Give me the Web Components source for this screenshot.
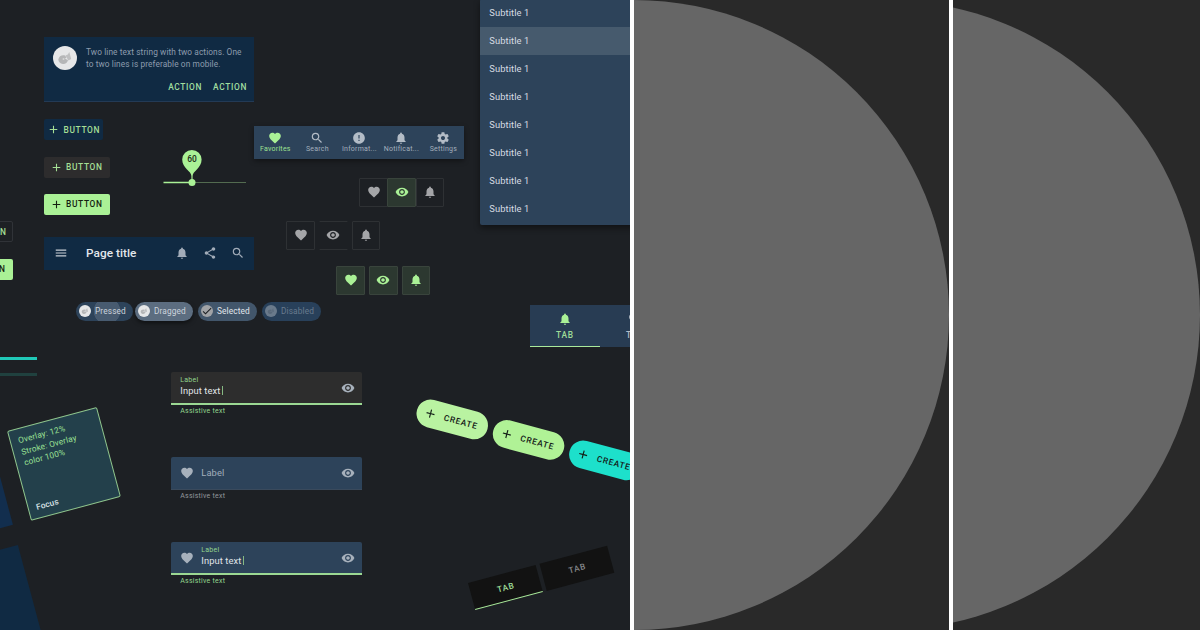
<!DOCTYPE html>
<html lang="en">
<head>
  <meta charset="UTF-8">
  <title>Dark theme components</title>
<style>
body {
  margin: 0;
  width: 1200px;
  height: 630px;
  overflow: hidden;
  background: #fff;
  font-family: Roboto, "Liberation Sans", sans-serif;
}

ui-gallery {
  --green: #aaf196;
  --navy: #102a43;
  --steel: #2d435a;
  --canvas: #1d2024;
}

/* free canvas: every sample sits at its own spot */
ui-board > * {
  position: absolute;
  left: var(--x);
  top: var(--y);
}
</style>
</head>
<body>

<ui-gallery>
  <ui-board>
    <ui-banner style="--x:44px;--y:37px">
      Two line text string with two actions. One<br>to two lines is preferable on mobile.
      <span slot="action">ACTION</span>
      <span slot="action">ACTION</span>
    </ui-banner>

    <ui-button kind="text" style="--x:44px;--y:119px">BUTTON</ui-button>
    <ui-button kind="tonal" style="--x:44px;--y:156.5px">BUTTON</ui-button>
    <ui-button kind="filled" style="--x:44px;--y:193.5px">BUTTON</ui-button>
    <ui-button kind="outlined" style="--x:-53px;--y:221px">BUTTON</ui-button>
    <ui-button kind="filled" style="--x:-53px;--y:258.5px">BUTTON</ui-button>

    <ui-slider style="--x:163px;--y:149px">60</ui-slider>

    <ui-app-bar style="--x:44px;--y:237px">Page title</ui-app-bar>

    <ui-bottom-nav style="--x:254.4px;--y:126px">
      <ui-nav-item icon="heart" active>Favorites</ui-nav-item>
      <ui-nav-item icon="search">Search</ui-nav-item>
      <ui-nav-item icon="info">Informat...</ui-nav-item>
      <ui-nav-item icon="bell">Notificat...</ui-nav-item>
      <ui-nav-item icon="gear">Settings</ui-nav-item>
    </ui-bottom-nav>

    <ui-toggle-row joined style="--x:359.4px;--y:178px">
      <ui-toggle icon="heart"></ui-toggle>
      <ui-toggle icon="eye" on></ui-toggle>
      <ui-toggle icon="bell"></ui-toggle>
    </ui-toggle-row>
    <ui-toggle-row style="--x:286.4px;--y:221px">
      <ui-toggle icon="heart"></ui-toggle>
      <ui-toggle icon="eye" open-sides></ui-toggle>
      <ui-toggle icon="bell"></ui-toggle>
    </ui-toggle-row>
    <ui-toggle-row style="--x:336.4px;--y:266px">
      <ui-toggle icon="heart" on></ui-toggle>
      <ui-toggle icon="eye" on></ui-toggle>
      <ui-toggle icon="bell" on></ui-toggle>
    </ui-toggle-row>

    <ui-chip state="pressed" style="--x:76px;--y:302px;--w:56.5px">Pressed</ui-chip>
    <ui-chip state="dragged" style="--x:135px;--y:302px;--w:58px">Dragged</ui-chip>
    <ui-chip state="selected" style="--x:198px;--y:302px;--w:59px">Selected</ui-chip>
    <ui-chip state="disabled" style="--x:262px;--y:302px;--w:59px">Disabled</ui-chip>

    <ui-progress style="--x:0px;--y:357px"></ui-progress>
    <ui-progress dim style="--x:0px;--y:373px"></ui-progress>

    <ui-state-card style="--x:-101.4px;--y:459.3px;--bg:#122e4e"></ui-state-card>
    <ui-state-card style="--x:-71.8px;--y:569px"></ui-state-card>
    <ui-state-card focus style="--x:6.8px;--y:430.6px">
      Overlay: 12%<br>Stroke: Overlay<br>color 100%
      <span slot="name">Focus</span>
    </ui-state-card>

    <ui-field label="Label" assist="Assistive text" active style="--x:171px;--y:372px;--bg:#2d2d2d">Input text</ui-field>
    <ui-field assist="Assistive text" icon="heart" style="--x:171px;--y:457px">Label</ui-field>
    <ui-field label="Label" assist="Assistive text" icon="heart" active style="--x:171px;--y:542px">Input text</ui-field>

    <ui-menu style="--x:480px;--y:-1.5px">
      <ui-menu-item>Subtitle 1</ui-menu-item>
      <ui-menu-item hovered>Subtitle 1</ui-menu-item>
      <ui-menu-item>Subtitle 1</ui-menu-item>
      <ui-menu-item>Subtitle 1</ui-menu-item>
      <ui-menu-item>Subtitle 1</ui-menu-item>
      <ui-menu-item>Subtitle 1</ui-menu-item>
      <ui-menu-item>Subtitle 1</ui-menu-item>
      <ui-menu-item>Subtitle 1</ui-menu-item>
    </ui-menu>

    <ui-tabs style="--x:529.5px;--y:305px">
      <ui-tab icon="bell" active>TAB</ui-tab>
      <ui-tab icon="heart">TAB</ui-tab>
    </ui-tabs>
    <ui-tabs tilted style="--x:467.7px;--y:582.8px">
      <ui-tab dark active>TAB</ui-tab>
      <ui-tab dark>TAB</ui-tab>
    </ui-tabs>

    <ui-fab-row style="--x:416.6px;--y:395.6px">
      <ui-fab style="--bg:#b9f3a1">CREATE</ui-fab>
      <ui-fab style="--bg:#b0f296">CREATE</ui-fab>
      <ui-fab style="--bg:#1de0cb">CREATE</ui-fab>
    </ui-fab-row>
  </ui-board>

  <ui-disc></ui-disc>
  <ui-disc cut></ui-disc>
</ui-gallery>

<script>
const icons = {
  heart: "M12 21.35l-1.45-1.32C5.4 15.36 2 12.28 2 8.5 2 5.42 4.42 3 7.5 3c1.74 0 3.41.81 4.5 2.09C13.09 3.81 14.76 3 16.5 3 19.58 3 22 5.42 22 8.5c0 3.78-3.4 6.86-8.55 11.54L12 21.35z",
  search: "M15.5 14h-.79l-.28-.27A6.47 6.47 0 0 0 16 9.5 6.5 6.5 0 1 0 9.5 16c1.61 0 3.09-.59 4.23-1.57l.27.28v.79l5 4.99L20.49 19l-4.99-5zm-6 0C7.01 14 5 11.99 5 9.5S7.01 5 9.5 5 14 7.01 14 9.5 11.99 14 9.5 14z",
  info: "M12 2C6.48 2 2 6.48 2 12s4.48 10 10 10 10-4.48 10-10S17.52 2 12 2zm1 15h-2v-2h2v2zm0-4h-2V7h2v6z",
  bell: "M12 22c1.1 0 2-.9 2-2h-4c0 1.1.89 2 2 2zm6-6v-5c0-3.07-1.64-5.64-4.5-6.32V4c0-.83-.67-1.5-1.5-1.5s-1.5.67-1.5 1.5v.68C7.63 5.36 6 7.92 6 11v5l-2 2v1h16v-1l-2-2z",
  gear: "M19.43 12.98c.04-.32.07-.64.07-.98s-.03-.66-.07-.98l2.11-1.65c.19-.15.24-.42.12-.64l-2-3.46c-.12-.22-.39-.3-.61-.22l-2.49 1c-.52-.4-1.08-.73-1.69-.98l-.38-2.65A.49.49 0 0 0 14 2h-4c-.25 0-.46.18-.49.42l-.38 2.65c-.61.25-1.17.59-1.69.98l-2.49-1c-.23-.09-.49 0-.61.22l-2 3.46c-.13.22-.07.49.12.64l2.11 1.65c-.04.32-.07.65-.07.98s.03.66.07.98l-2.11 1.65c-.19.15-.24.42-.12.64l2 3.46c.12.22.39.3.61.22l2.49-1c.52.4 1.08.73 1.69.98l.38 2.65c.03.24.24.42.49.42h4c.25 0 .46-.18.49-.42l.38-2.65c.61-.25 1.17-.59 1.69-.98l2.49 1c.23.09.49 0 .61-.22l2-3.46c.12-.22.07-.49-.12-.64l-2.11-1.65zM12 15.5c-1.93 0-3.5-1.57-3.5-3.5s1.57-3.5 3.5-3.5 3.5 1.57 3.5 3.5-1.57 3.5-3.5 3.5z",
  eye: "M12 4.5C7 4.5 2.73 7.61 1 12c1.73 4.39 6 7.5 11 7.5s9.27-3.11 11-7.5c-1.73-4.39-6-7.5-11-7.5zM12 17c-2.76 0-5-2.24-5-5s2.24-5 5-5 5 2.24 5 5-2.24 5-5 5zm0-8c-1.66 0-3 1.34-3 3s1.34 3 3 3 3-1.34 3-3-1.34-3-3-3z",
  plus: "M19 13h-6v6h-2v-6H5v-2h6V5h2v6h6v2z",
  menu: "M3 18h18v-2H3v2zm0-5h18v-2H3v2zm0-7v2h18V6H3z",
  share: "M18 16.08c-.76 0-1.44.3-1.96.77L8.91 12.7c.05-.23.09-.46.09-.7s-.04-.47-.09-.7l7.05-4.11c.54.5 1.25.81 2.04.81 1.66 0 3-1.34 3-3s-1.34-3-3-3-3 1.34-3 3c0 .24.04.47.09.7L8.04 9.81C7.5 9.31 6.79 9 6 9c-1.66 0-3 1.34-3 3s1.34 3 3 3c.79 0 1.5-.31 2.04-.81l7.12 4.16c-.05.21-.08.43-.08.65 0 1.61 1.31 2.92 2.92 2.92s2.92-1.31 2.92-2.92-1.31-2.92-2.92-2.92z",
  check: "M9 16.17L4.83 12l-1.42 1.41L9 19 21 7l-1.41-1.41z"
};

// small base: each element only supplies its markup
function element(name, render) {
  customElements.define(name, class extends HTMLElement {
    constructor() {
      super();
      const template = document.createElement("template");
      template.innerHTML = render(this);
      this.attachShadow({ mode: "open" }).appendChild(template.content.cloneNode(true));
    }
  });
}

element("ui-icon", (el) => `
  <style>
    :host { display: block; width: var(--size, 14px); height: var(--size, 14px); flex: none; }
    svg { display: block; width: 100%; height: 100%; fill: currentColor; }
  </style>
  <svg viewBox="0 0 24 24" aria-hidden="true"><path d="${icons[el.getAttribute("name")]}"/></svg>
`);

element("ui-avatar", () => `
  <style>
    :host { display: block; width: var(--size, 12px); height: var(--size, 12px); flex: none; }
    svg { display: block; width: 100%; height: 100%; }
  </style>
  <svg viewBox="0 0 24 24" aria-hidden="true">
    <circle cx="12" cy="12" r="12" fill="#e6e7e8"/>
    <path d="M5.3 13.5C6 10 9 8.6 12 9.500l1.5 2-1.5 1.2 3 1.3c-.6 2.7-2.8 4.3-5.2 4C7.2 17.7 5.5 16 5.3 13.5z" fill="#b5b6b7"/>
    <path d="M12.5 9.6l2.3-1.2 1.5-2.4 1.9 7-2.8 1.4-1.6-2.6z" fill="#bfc0c1"/>
    <circle cx="10.5" cy="13" r="1" fill="#d5d6d6"/>
  </svg>
`);

element("ui-gallery", () => `
  <style>
    :host { display: flex; gap: 4px; width: 1200px; height: 630px; }
  </style>
  <slot></slot>
`);

element("ui-board", () => `
  <style>
    :host {
      display: block;
      position: relative;
      flex: none;
      width: 630px;
      height: 630px;
      overflow: hidden;
      background: var(--canvas);
      color: #dfe3e8;
    }
  </style>
  <slot></slot>
`);

element("ui-disc", () => `
  <style>
    :host { display: flex; justify-content: flex-end; flex: none; width: 315px; height: 630px; overflow: hidden; background: #292929; }
    :host([cut]) { width: 247px; }
    div { flex: none; width: 630px; height: 630px; border-radius: 50%; background: #666; }
  </style>
  <div></div>
`);

element("ui-banner", () => `
  <style>
    :host {
      display: flex;
      flex-direction: column;
      justify-content: space-between;
      box-sizing: border-box;
      width: 210px;
      height: 65px;
      padding: 9px 7px 8.5px 9px;
      background: var(--navy);
      border-bottom: 1px solid #233a55;
    }
    .row { display: flex; gap: 9px; }
    p { margin: 1px 0 0; font-size: 8.3px; line-height: 11.67px; letter-spacing: 0.1px; color: #8d9cae; white-space: nowrap; }
    .actions { display: flex; justify-content: flex-end; gap: 11px; font-size: 8.4px; line-height: 12px; font-weight: 500; letter-spacing: 0.65px; color: #a0dfa0; }
    ui-avatar { --size: 24px; }
  </style>
  <div class="row"><ui-avatar></ui-avatar><p><slot></slot></p></div>
  <div class="actions"><slot name="action"></slot></div>
`);

element("ui-button", () => `
  <style>
    :host {
      display: flex;
      align-items: center;
      gap: 3.5px;
      box-sizing: border-box;
      width: 66px;
      height: 21px;
      padding-left: 5.5px;
      border-radius: 2px;
      font-size: 8.4px;
      font-weight: 500;
      letter-spacing: 0.65px;
      color: #a5df95;
    }
    ui-icon { --size: 13px; }
    :host([kind="text"]) { width: 58.5px; padding-left: 3px; background: var(--navy); }
    :host([kind="tonal"]) { background: #2d2c2d; }
    :host([kind="outlined"]) { border: 1px solid #303338; }
    :host([kind="filled"]) { background: var(--green); color: #14200f; }
  </style>
  <ui-icon name="plus"></ui-icon><slot></slot>
`);

element("ui-slider", () => `
  <style>
    :host { display: grid; width: 84px; height: 38px; color: #1a2a16; }
    svg, span { grid-area: 1 / 1; }
    span { width: 58px; text-align: center; font-size: 8.4px; line-height: 21px; font-weight: 500; }
  </style>
  <svg width="84" height="38" aria-hidden="true">
    <path d="M29 33.5H83" stroke="#536b50" stroke-width="1.2"/>
    <path d="M0.5 33.5H29" stroke="#aaf196" stroke-width="1.5"/>
    <path d="M28.4 33V27C28.4 22.5 19.2 19 19.2 10.6a9.7 9.7 0 0 1 19.4 0C38.6 19 29.6 22.5 29.6 27V33z" fill="#aaf196"/>
    <circle cx="29" cy="33.4" r="3.5" fill="#aaf196"/>
  </svg>
  <span><slot></slot></span>
`);

element("ui-app-bar", () => `
  <style>
    :host {
      display: flex;
      align-items: center;
      box-sizing: border-box;
      width: 210px;
      height: 32.5px;
      padding: 0 9.5px;
      background: var(--navy);
      color: #a2acb9;
    }
    h1 { flex: 1; margin: 0 0 0 18.5px; font-size: 11.8px; font-weight: 500; letter-spacing: 0.05px; color: #e3e7ec; }
    nav { display: flex; gap: 14px; }
    ui-icon[name="menu"] { color: #c7ced6; }
  </style>
  <ui-icon name="menu"></ui-icon>
  <h1><slot></slot></h1>
  <nav><ui-icon name="bell"></ui-icon><ui-icon name="share"></ui-icon><ui-icon name="search"></ui-icon></nav>
`);

element("ui-bottom-nav", () => `
  <style>
    :host { display: flex; width: 210px; height: 32.5px; background: var(--steel); box-shadow: 0 2px 5px rgba(0, 0, 0, 0.4); }
  </style>
  <slot></slot>
`);

element("ui-nav-item", (el) => `
  <style>
    :host { display: flex; flex-direction: column; align-items: center; gap: 0.7px; flex: 1 1 0; min-width: 0; padding-top: 4.5px; font-size: 7px; line-height: 9px; letter-spacing: 0.23px; color: #a3afbc; }
    :host([active]) { color: #9de291; }
    ui-icon { color: #b3bcc6; }
    :host([active]) ui-icon { color: var(--green); }
  </style>
  <ui-icon name="${el.getAttribute("icon")}"></ui-icon><slot></slot>
`);

element("ui-toggle-row", () => `
  <style>
    :host { display: flex; gap: 4px; }
    :host([joined]) { gap: 0; --overlap: -0.5px; }
  </style>
  <slot></slot>
`);

element("ui-toggle", (el) => `
  <style>
    :host {
      display: flex;
      align-items: center;
      justify-content: center;
      box-sizing: border-box;
      width: 28.6px;
      height: 28.5px;
      margin-right: var(--overlap, 0);
      border: 1px solid #2e3134;
      border-radius: 1px;
      color: #a4a5a8;
    }
    :host([open-sides]) { border-left-color: transparent; border-right-color: transparent; }
    :host([on]) { background: #2c3830; border-color: #39443c; color: var(--green); }
  </style>
  <ui-icon name="${el.getAttribute("icon")}"></ui-icon>
`);

element("ui-chip", (el) => `
  <style>
    :host {
      display: flex;
      align-items: center;
      gap: 4.5px;
      box-sizing: border-box;
      width: var(--w);
      height: 18.5px;
      padding-left: 2px;
      border-radius: 10px;
      background: var(--steel);
      font-size: 8.3px;
      letter-spacing: 0.12px;
      color: #ccd4dc;
    }
    :host([state="pressed"]) { background: radial-gradient(circle at 31px 9px, #485b70 13px, transparent 13.5px) var(--steel); }
    :host([state="dragged"]) { background: #5c6d80; box-shadow: 0 2px 4px rgba(0, 0, 0, 0.5); }
    :host([state="selected"]) { background: #42566b; color: #e2e7ec; }
    :host([state="disabled"]) { background: #28405a; color: #687b8e; }
    :host([state="disabled"]) ui-avatar { opacity: 0.35; }
    ui-avatar, .check { margin-left: 0.5px; }
    .check { display: flex; align-items: center; justify-content: center; width: 12px; height: 12px; border-radius: 50%; background: #a1a3a6; color: #1d2024; --size: 12px; }
  </style>
  ${el.getAttribute("state") === "selected"
    ? `<span class="check"><ui-icon name="check"></ui-icon></span>`
    : `<ui-avatar></ui-avatar>`}
  <slot></slot>
`);

element("ui-progress", () => `
  <style>
    :host { display: block; width: 36.5px; height: 3px; background: #20c9b8; }
    :host([dim]) { background: #20413f; }
  </style>
`);

element("ui-state-card", () => `
  <style>
    :host {
      display: flex;
      flex-direction: column;
      justify-content: space-between;
      box-sizing: border-box;
      width: 93px;
      height: 93px;
      padding: 6px 7.5px 4px;
      background: var(--bg, var(--navy));
      transform: rotate(-15deg);
      transform-origin: 0 0;
      font-size: 8.3px;
      line-height: 11.67px;
      letter-spacing: 0.12px;
      color: #9ce095;
    }
    :host([focus]) { border: 1px solid #8fc58d; border-radius: 2px; background: #23404b; }
    b { font-weight: 500; color: #dbe3e8; }
  </style>
  <div><slot></slot></div>
  <b><slot name="name"></slot></b>
`);

element("ui-field", (el) => `
  <style>
    :host { display: block; width: 191px; color: #e0e4e8; }
    .box {
      display: flex;
      align-items: center;
      gap: 7px;
      box-sizing: border-box;
      height: 32.5px;
      padding: 0 7px 0 9.3px;
      border-radius: 2px 2px 0 0;
      border-bottom: 1px solid #3a4a5c;
      background: var(--bg, var(--steel));
    }
    :host([active]) .box { border-bottom: 2px solid #9bd893; }
    :host([active]) ui-icon { margin-top: 1px; }
    .text { display: flex; flex-direction: column; flex: 1; font-size: 9.33px; line-height: 11px; letter-spacing: 0.09px; }
    :host([active]) .text { padding-bottom: 2px; }
    :host(:not([active])) .text { color: #a2aebb; }
    .text small, .assist { font-size: 7px; line-height: 9px; letter-spacing: 0.23px; }
    small, :host([active]) .assist { color: #93d58e; }
    .value { display: flex; align-items: center; gap: 2px; }
    :host([active]) .value::after { content: ""; width: 1px; height: 9px; background: #86b983; }
    .assist { margin: 2px 0 0 9.3px; color: #92969b; }
    ui-icon { color: #a7b1bc; }
  </style>
  <div class="box">
    ${el.hasAttribute("icon") ? `<ui-icon name="${el.getAttribute("icon")}"></ui-icon>` : ""}
    <div class="text">
      ${el.hasAttribute("label") ? `<small>${el.getAttribute("label")}</small>` : ""}
      <span class="value"><slot></slot></span>
    </div>
    <ui-icon name="eye"></ui-icon>
  </div>
  <div class="assist">${el.getAttribute("assist")}</div>
`);

element("ui-menu", () => `
  <style>
    :host { display: block; width: 163px; padding-bottom: 2.5px; border-radius: 2px; background: var(--steel); box-shadow: 0 3px 6px rgba(0, 0, 0, 0.45); }
  </style>
  <slot></slot>
`);

element("ui-menu-item", () => `
  <style>
    :host { display: flex; align-items: center; height: 28px; padding-left: 9.3px; font-size: 9.33px; letter-spacing: 0.09px; color: #d6dce3; }
    :host([hovered]) { background: #465a6d; }
  </style>
  <slot></slot>
`);

element("ui-tabs", () => `
  <style>
    :host { display: flex; }
    :host([tilted]) { gap: 4px; transform: rotate(-15deg); transform-origin: 0 0; }
  </style>
  <slot></slot>
`);

element("ui-tab", (el) => `
  <style>
    :host {
      display: flex;
      flex-direction: column;
      align-items: center;
      justify-content: center;
      gap: 4px;
      box-sizing: border-box;
      width: 70px;
      height: 42px;
      padding: 0.8px 0 0 0.8px;
      border-bottom: 1.2px solid transparent;
      background: #283c53;
      font-size: 8.4px;
      line-height: 10px;
      font-weight: 500;
      letter-spacing: 0.7px;
      color: #b4bdc8;
    }
    :host([dark]) { height: 28px; background: #121212; color: #85878a; }
    :host([active]) { border-bottom-color: #a9e99b; color: #9fdc98; }
    ui-icon { color: #c5ccd4; }
    :host([active]) ui-icon { color: var(--green); }
  </style>
  ${el.hasAttribute("icon") ? `<ui-icon name="${el.getAttribute("icon")}"></ui-icon>` : ""}
  <slot></slot>
`);

element("ui-fab-row", () => `
  <style>
    :host { display: flex; gap: 6.2px; transform: rotate(15deg); transform-origin: 0 50%; }
  </style>
  <slot></slot>
`);

element("ui-fab", () => `
  <style>
    :host {
      display: flex;
      align-items: center;
      gap: 7px;
      box-sizing: border-box;
      width: 73px;
      height: 28px;
      padding-left: 7px;
      border-radius: 14px;
      background: var(--bg);
      font-size: 8.4px;
      font-weight: 500;
      letter-spacing: 0.7px;
      color: #142018;
    }
  </style>
  <ui-icon name="plus"></ui-icon><slot></slot>
`);
</script>

</body>
</html>
